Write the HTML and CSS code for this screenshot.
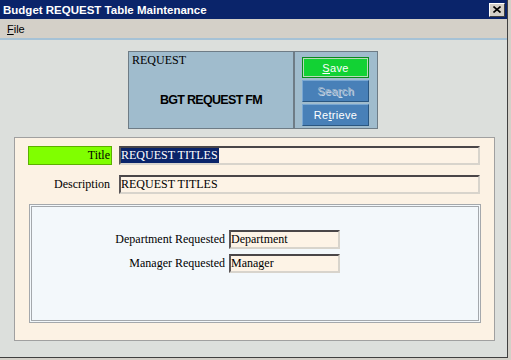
FILE: index.html
```html
<!DOCTYPE html>
<html lang="en">
<head>
<meta charset="UTF-8">
<meta name="viewport" content="width=device-width, initial-scale=1.0">
<title>Budget REQUEST Table Maintenance</title>
<link rel="stylesheet" href="styles.css">
</head>
<body>

<div class="window">
<div class="titlebar">
<span class="caption">Budget REQUEST Table Maintenance</span>
<span class="close">
<svg width="8" height="7" viewBox="0 0 8 7"><path d="M0.5 0.5 L7.5 6.5 M7.5 0.5 L0.5 6.5" stroke="#000" stroke-width="1.6" fill="none"/></svg>
</span>
</div>

<div class="menubar">
<span class="menu"><u>F</u>ile</span>
</div>

<div class="content">
<div class="header">
<div class="header-info">
<div class="table-name">REQUEST</div>
<div class="form-name">BGT REQUEST FM</div>
</div>
<div class="actions">
<button class="btn btn-save"><u>S</u>ave</button>
<button class="btn btn-disabled">Sea<u>r</u>ch</button>
<button class="btn">Re<u>t</u>rieve</button>
</div>
</div>

<div class="main">
<div class="row">
<div class="label label-key">Title</div>
<div class="field field-wide"><span class="selected">REQUEST TITLES</span></div>
</div>
<div class="row">
<div class="label">Description</div>
<div class="field field-wide">REQUEST TITLES</div>
</div>

<div class="detail">
<div class="detail-grid">
<span class="detail-label">Department Requested</span>
<div class="field">Department</div>
<span class="detail-label">Manager Requested</span>
<div class="field">Manager</div>
</div>
</div>
</div>
</div>
</div>

</body>
</html>
```

FILE: styles.css
```css
body {
    margin: 0;
    padding: 0;
    background-color: #d4d0c8;
    font-family: "Liberation Serif", "Times New Roman", serif;
    font-size: 12px;
    color: #000;
}

.window {
    width: 507px;
    height: 357px;
    background-color: #dcdfdc;
    border-right: 1px solid #404040;
    border-bottom: 1px solid #404040;
}

.titlebar {
    height: 19px;
    background-color: #0a246a;
    display: flex;
    align-items: center;
    justify-content: space-between;
    padding-left: 3px;
}

.caption {
    color: #fff;
    font-family: "Liberation Sans", Arial, sans-serif;
    font-weight: bold;
    font-size: 11.5px;
}

.close {
    width: 16px;
    height: 14px;
    box-sizing: border-box;
    margin-right: 2px;
    background-color: #d4d0c8;
    border: 1px solid;
    border-color: #fff #404040 #404040 #fff;
    display: flex;
    align-items: center;
    justify-content: center;
}

.menubar {
    height: 19px;
    background-color: #d4d0c8;
    border-bottom: 2px solid #a6c2d6;
    display: flex;
    align-items: center;
    padding-left: 7px;
}

.menu {
    font-family: "Liberation Sans", Arial, sans-serif;
    font-size: 11px;
}

.content {
    padding-top: 11px;
}

.header {
    margin-left: 128px;
    width: 250px;
    height: 78px;
    box-sizing: border-box;
    border: 1px solid #6e7c86;
    background-color: #a0bccd;
    display: flex;
}

.header-info {
    width: 166px;
    box-sizing: border-box;
    border-right: 2px solid #6e7c86;
    padding: 1px 0 0 3px;
}

.table-name {
    line-height: 14px;
}

.form-name {
    margin-top: 26px;
    line-height: 14px;
    text-align: center;
    padding-right: 3px;
    font-family: "Liberation Sans", Arial, sans-serif;
    font-weight: bold;
    font-size: 12.5px;
    letter-spacing: -0.7px;
}

.actions {
    padding: 5px 0 0 7px;
    display: flex;
    flex-direction: column;
    gap: 2px;
}

.btn {
    width: 67px;
    height: 22px;
    box-sizing: border-box;
    padding: 0;
    background-color: #4880b8;
    color: #fff;
    border: 1px solid;
    border-color: #78a6d2 #2a5680 #2a5680 #78a6d2;
    font-family: "Liberation Sans", Arial, sans-serif;
    font-size: 11px;
    letter-spacing: 0.3px;
}

.btn-save {
    height: 21px;
    background-color: #12d234;
    border: 1px solid #0a8a1e;
    box-shadow: inset 0 0 0 1px #b8dcb8;
}

.btn-disabled {
    color: #9db3c9;
    text-shadow: 1px 1px 0 #c8d8e8;
}

.main {
    margin: 8px 0 0 14px;
    width: 481px;
    height: 204px;
    box-sizing: border-box;
    border: 1px solid #a0a0a0;
    background-color: #fcf2e4;
    padding: 8px 0 0 13px;
}

.row {
    display: flex;
    gap: 7px;
    margin-bottom: 10px;
}

.label {
    width: 84px;
    height: 19px;
    box-sizing: border-box;
    padding-right: 1px;
    text-align: right;
    line-height: 17px;
    border: 1px solid transparent;
}

.label-key {
    background-color: #80ff00;
    border-color: #5cb000;
}

.field {
    width: 111px;
    height: 19px;
    box-sizing: border-box;
    border: 2px solid;
    border-color: #4a4648 #d8d4cc #d8d4cc #5a5658;
    background-color: #fdf3e6;
    line-height: 15px;
    white-space: nowrap;
    overflow: hidden;
}

.field-wide {
    width: 361px;
}

.selected {
    background-color: #0a246a;
    color: #fff;
    display: inline-block;
    padding-right: 1px;
}

.detail {
    margin: 4px 0 0 1px;
    width: 452px;
    height: 119px;
    box-sizing: border-box;
    border: 3px double #a4a8ac;
    background-color: #f3f8fb;
    padding-top: 23px;
}

.detail-grid {
    display: grid;
    grid-template-columns: 193px 111px;
    column-gap: 4px;
    row-gap: 5px;
}

.detail-label {
    text-align: right;
    line-height: 19px;
}
```
